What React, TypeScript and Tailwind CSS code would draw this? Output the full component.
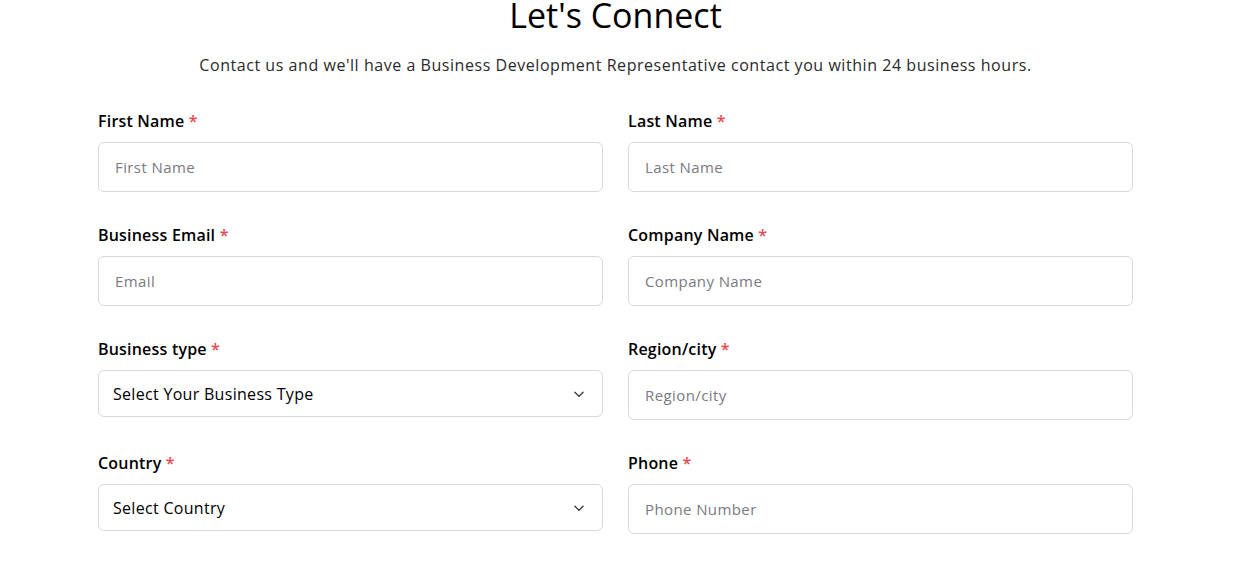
import React from 'react';

const font = { fontFamily: '"Open Sans", "Liberation Sans", sans-serif' };

const Label = ({ text }: { text: string }) => (
  <label className="block text-[16px] font-semibold text-black leading-6 mb-[9px] tracking-[0.2px]">
    {text} <span className="text-[#e5484d]">*</span>
  </label>
);

const Input = ({ placeholder }: { placeholder: string }) => (
  <input
    placeholder={placeholder}
    className="w-full h-[50px] px-4 rounded-md border border-[#d9d9d9] bg-white text-[15px] tracking-[0.4px] text-black placeholder:text-[#7a7a80] outline-none"
  />
);

const Select = ({ value }: { value: string }) => (
  <div className="w-full h-[47px] px-[14px] rounded-md border border-[#d9d9d9] bg-white flex items-center justify-between">
    <span className="text-[16px] tracking-[0.3px] text-black">{value}</span>
    <svg width="14" height="14" viewBox="0 0 24 24" fill="none" stroke="#333" strokeWidth="2.2" strokeLinecap="round" strokeLinejoin="round" className="mr-[2px]">
      <path d="M5 9l7 7 7-7" />
    </svg>
  </div>
);

export default function App() {
  const rows: [React.ReactNode, React.ReactNode][] = [
    [
      <><Label text="First Name" /><Input placeholder="First Name" /></>,
      <><Label text="Last Name" /><Input placeholder="Last Name" /></>,
    ],
    [
      <><Label text="Business Email" /><Input placeholder="Email" /></>,
      <><Label text="Company Name" /><Input placeholder="Company Name" /></>,
    ],
    [
      <><Label text="Business type" /><Select value="Select Your Business Type" /></>,
      <><Label text="Region/city" /><Input placeholder="Region/city" /></>,
    ],
    [
      <><Label text="Country" /><Select value="Select Country" /></>,
      <><Label text="Phone" /><Input placeholder="Phone Number" /></>,
    ],
  ];

  return (
    <div className="w-[1231px] h-[574px] bg-white overflow-hidden" style={font}>
      <div className="flex flex-col items-center pt-[2px]">
        <h1 className="text-[34px] leading-[34px] -mt-[4px] text-black font-normal">Let's Connect</h1>
        <p className="mt-[21px] text-[16px] tracking-[0.55px] text-[#2a2a2a]">
          Contact us and we'll have a Business Development Representative contact you within 24 business hours.
        </p>
      </div>
      <div className="w-[1035px] mx-auto mt-[32px] flex flex-col gap-[31px]">
        {rows.map((r, i) => (
          <div key={i} className="grid grid-cols-2 gap-[25px]">
            <div>{r[0]}</div>
            <div>{r[1]}</div>
          </div>
        ))}
      </div>
    </div>
  );
}
